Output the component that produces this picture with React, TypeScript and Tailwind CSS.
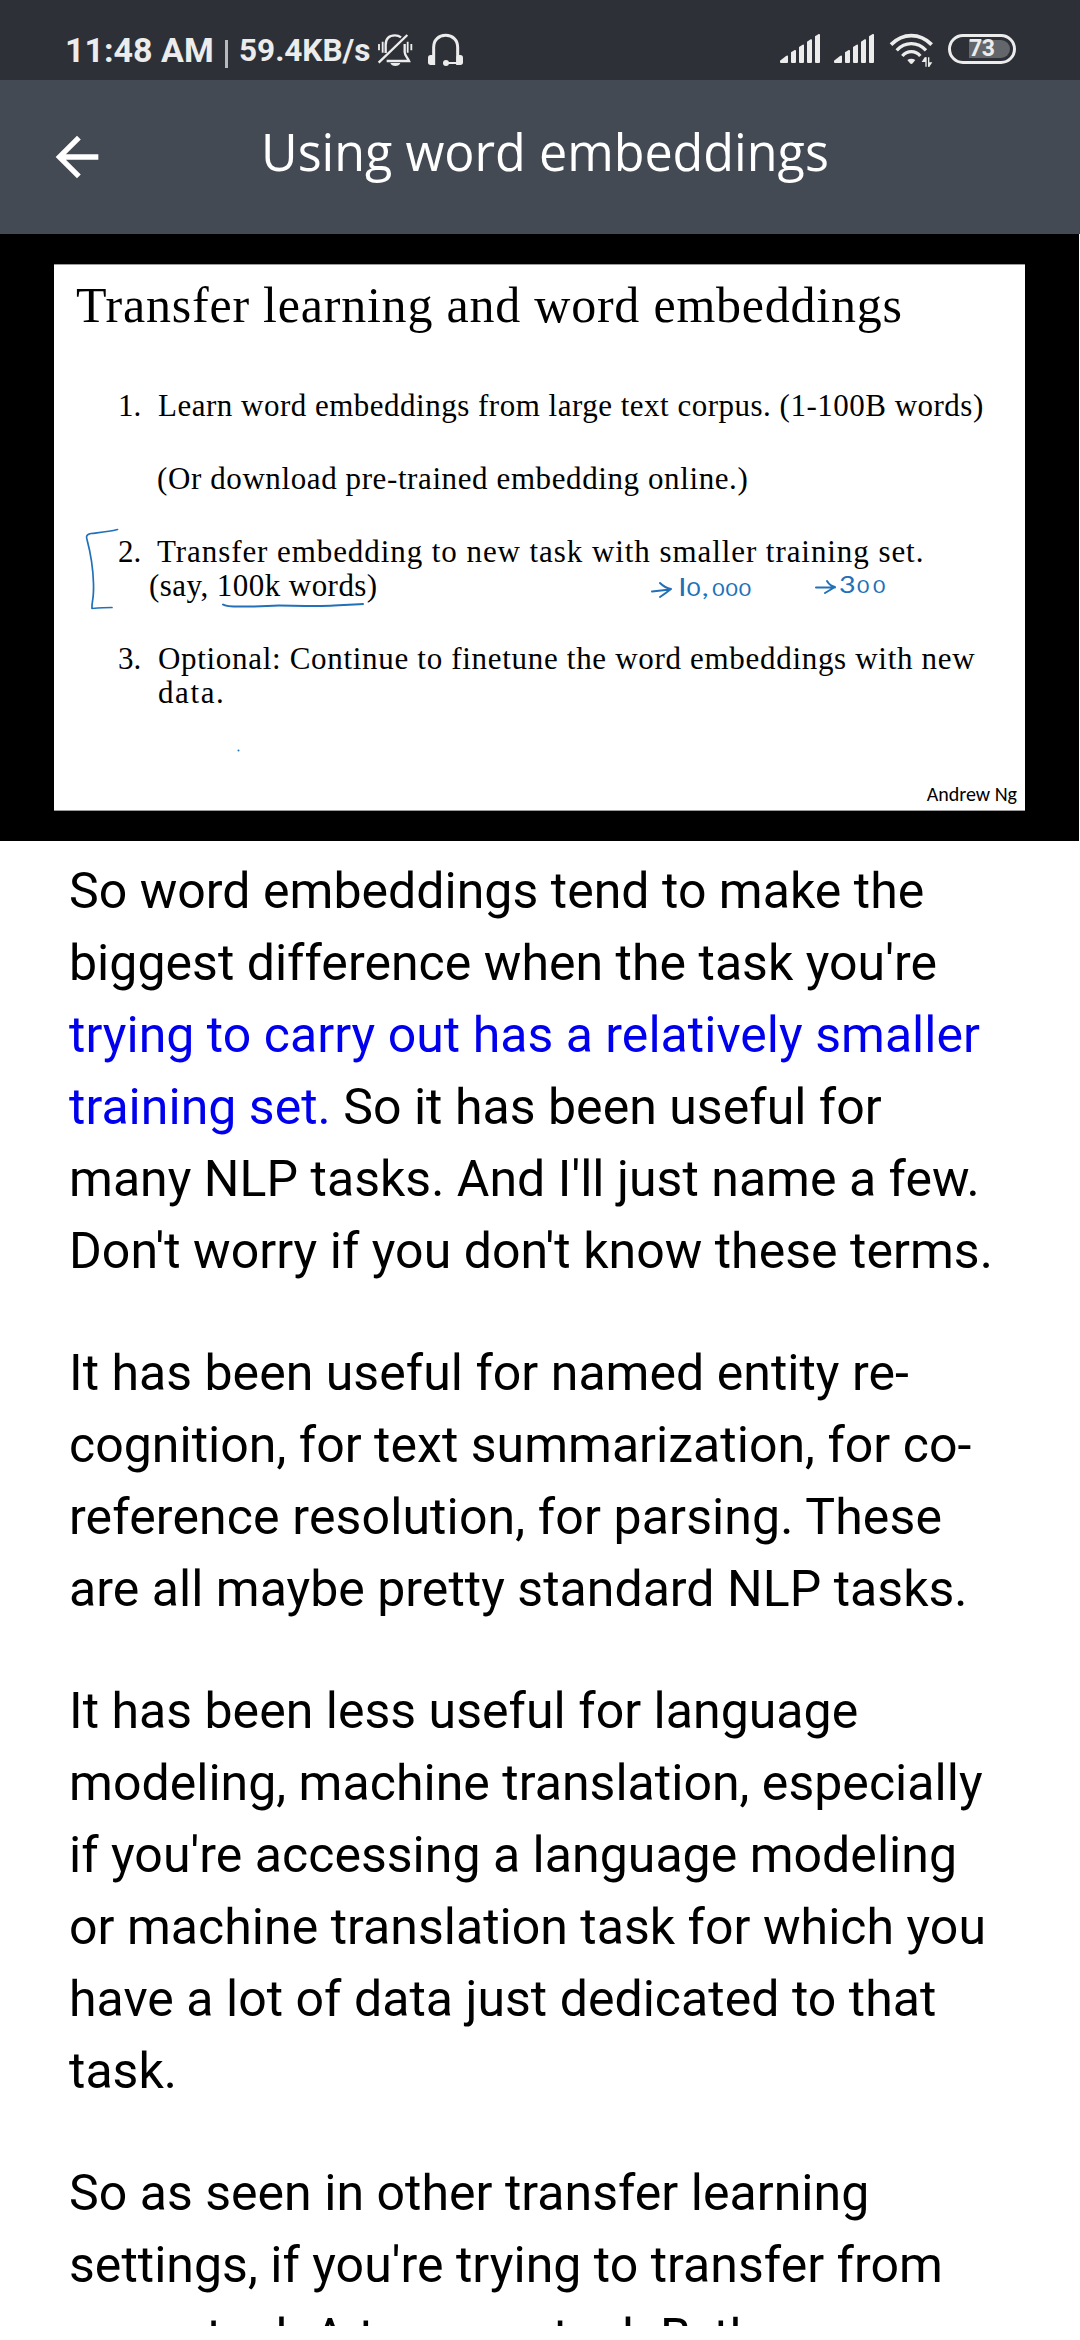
import type { ReactNode } from "react";

function MutedBellIcon() {
  return (
    <svg className="h-9 w-9" viewBox="21 21 108 108" fill="none" stroke="#ececec" strokeWidth="7">
      <path d="M27 57v19M38 50v33M113 50v33M124 57v19" strokeWidth="5.500" />
      <path d="M47 84V60C47 40 58 31 75 31c8 0 13 2 18 6" />
      <path d="M104 57v24c0 10 8 16 13 27H50" />
      <path d="M26 113 112 30" />
      <path d="M61 114h30c-3 12-27 12-30 0z" fill="#ececec" stroke="none" />
    </svg>
  );
}

function HeadsetIcon() {
  return (
    <svg className="h-9 w-[37px]" viewBox="171 21 111 108" fill="none" stroke="#ececec">
      <path d="M191 120V67c0-22 15-36 36-36s36 14 36 36v53" strokeWidth="9" />
      <rect x="174" y="90" width="20" height="30" rx="8" fill="#ececec" stroke="none" />
      <rect x="259" y="90" width="20" height="30" rx="8" fill="#ececec" stroke="none" />
      <circle cx="228" cy="114" r="9" fill="#ececec" stroke="none" />
      <path d="M228 114h35" strokeWidth="6" />
    </svg>
  );
}

function SignalIcon() {
  return (
    <svg className="mt-px h-[31px] w-[42px]" viewBox="27 24 126 93" fill="#ececec">
      <path d="M30 107l18-14q6-3 6 1v17q0 3-3 3H33q-3 0-3-3z" />
      <path d="M63 82l11-7q4-1 4 2v34q0 3-3 3h-9q-3 0-3-3z" />
      <path d="M87 66l11-7q4-1 4 2v50q0 3-3 3h-9q-3 0-3-3z" />
      <path d="M111 50l11-7q4-1 4 2v66q0 3-3 3h-9q-3 0-3-3z" />
      <path d="M135 34l11-7q4-1 4 2v82q0 3-3 3h-9q-3 0-3-3z" />
    </svg>
  );
}

function WifiIcon() {
  return (
    <svg className="h-9 w-[45px]" viewBox="357 21 135 108" fill="none" stroke="#ececec">
      <path d="M363 59Q390 32 424 32t61 27" strokeWidth="11" />
      <path d="M380 76q19-20 44-20t44 20" strokeWidth="10" />
      <path d="M397 93q11-13 27-13t27 13" strokeWidth="10" />
      <path d="M412 105q12-8 24 0l-8 10q-4 4-8 0z" fill="#ececec" stroke="none" />
      <path d="M468 125V97h-4l-9 14h13zM475 97v28h3l9-13h-12" fill="#ececec" stroke="none" />
      <path d="M468 97v28M476 97v28" strokeWidth="4" />
    </svg>
  );
}

function Battery() {
  return (
    <div className="mt-[2px] flex h-[30px] w-[68px] items-center rounded-full border-[3px] border-[#ececec]">
      <div className="ml-[18px] flex h-[18px] w-[41px] items-center rounded-r-full bg-[#63666b]">
        <span className="font-[Roboto] text-[23px] leading-[18px] font-bold tracking-[-0.5px] text-[#ececec]">73</span>
      </div>
    </div>
  );
}

function StatusBar() {
  return (
    <div className="flex h-20 items-start bg-[#2d3037] pt-8 pr-[64px] pl-[65px] font-[Roboto,sans-serif] font-bold whitespace-nowrap text-[#ececec]">
      <span className="w-[160px] text-[34px] leading-9">11:48 AM</span>
      <span className="mt-2 h-7 w-[3px] bg-[#b9babc]" />
      <span className="mt-px ml-[11px] w-[138px] text-[31.500px] leading-9">59.4KB/s</span>
      <MutedBellIcon />
      <div className="ml-[14px]">
        <HeadsetIcon />
      </div>
      <div className="ml-auto flex items-start">
        <SignalIcon />
        <div className="ml-3">
          <SignalIcon />
        </div>
        <div className="ml-[14px]">
          <WifiIcon />
        </div>
        <div className="ml-[14px]">
          <Battery />
        </div>
      </div>
    </div>
  );
}

function Header() {
  return (
    <header className="flex h-[154px] items-start bg-[#444a54] pl-[45px] text-white">
      <svg className="mt-[45px] h-16 w-16" viewBox="0 0 24 24" fill="currentColor">
        <path d="M20 11H7.83l5.59-5.59L12 4l-8 8 8 8 1.41-1.41L7.83 13H20z" />
      </svg>
      <h1 className="mt-[38px] ml-[152px] font-['Open_Sans',sans-serif] text-[50.250px] leading-[68px] whitespace-nowrap">
        Using word embeddings
      </h1>
    </header>
  );
}

function Annotations() {
  return (
    <div className="absolute inset-0 text-[#2170b8]">
      <svg className="h-full w-full" viewBox="54 265 971 545" fill="none" stroke="currentColor" strokeLinecap="round" strokeLinejoin="round">
        <path d="M117.500 529.500C108 532 99 532.500 91 533.500q-6 1-4 6c4 15 6 26 6.500 44s-2 17-1.500 25q12-1 20-1" strokeWidth="1.700" />
        <path d="M223 604.500c4 3 14 2 29 2s15-1 27-1 40 1 55 0 20-1 29-1.500" strokeWidth="2" />
        <circle cx="238.500" cy="750.500" r="1" fill="currentColor" stroke="none" />
        <path d="M652 591.500q9-1 18-2M660 583q5 5 11 6-5 4-11 8" strokeWidth="2" />
        <path d="M816 587.500h19M827 581q3 5 8 6-5 3-10 6" strokeWidth="2" />
      </svg>
      <div className="absolute top-[309px] left-[624px] flex h-6 items-end font-[Lato,sans-serif] leading-4 whitespace-nowrap">
        <span className="flex origin-bottom-left scale-x-125 items-baseline">
          <span className="font-['Liberation_Sans'] text-[25px] leading-4">I</span>
          <span className="text-[19px] leading-4">0</span>
          <span className="ml-px text-[24px] leading-4">,</span>
          <span className="ml-[3px] text-[17px] leading-4 tracking-[0.700px]">000</span>
        </span>
      </div>
      <div className="absolute top-[306px] left-[785px] flex h-6 items-end font-[Lato,sans-serif] leading-4 whitespace-nowrap">
        <span className="flex origin-bottom-left scale-x-125 items-baseline">
          <span className="text-[23px] leading-4">3</span>
          <span className="ml-px text-[17px] leading-4 tracking-[3px]">00</span>
        </span>
      </div>
    </div>
  );
}

function SlideItem({ marker, children }: { marker?: string; children: ReactNode }) {
  return (
    <li className="flex">
      <span className="w-10">{marker}</span>
      <div>{children}</div>
    </li>
  );
}

function Slide() {
  return (
    <section className="mr-px flex h-[607px] bg-black pt-[30px] pl-[54px]">
      <div className="relative h-[547px] w-[971px] border-y border-[#9c9c9c] bg-white font-['Liberation_Serif',serif] whitespace-nowrap text-black">
        <h2 className="mt-[10px] ml-[22px] text-[50px] leading-[60px] tracking-[0.780px]">
          Transfer learning and word embeddings
        </h2>
        <ol className="mt-[54px] ml-[64px] flex flex-col gap-[39px] text-[31px] leading-[34px]">
          <SlideItem marker="1.">
            <p className="tracking-[0.500px]">Learn word embeddings from large text corpus. (1-100B words)</p>
          </SlideItem>
          <SlideItem>
            <p className="-ml-px tracking-[0.600px]">(Or download pre-trained embedding online.)</p>
          </SlideItem>
          <SlideItem marker="2.">
            <p className="-ml-px tracking-[0.930px]">Transfer embedding to new task with smaller training set.</p>
            <p className="-ml-[9px] tracking-[0.450px]">(say, 100k words)</p>
          </SlideItem>
          <SlideItem marker="3.">
            <p className="tracking-[0.690px]">Optional: Continue to finetune the word embeddings with new</p>
            <p className="tracking-[1.600px]">data.</p>
          </SlideItem>
        </ol>
        <Annotations />
        <span className="absolute right-[8px] bottom-[2px] font-[Carlito,sans-serif] text-[20px] leading-7">Andrew Ng</span>
      </div>
    </section>
  );
}

const paragraphs: string[][] = [
  ["It has been useful for named entity re-", "cognition, for text summarization, for co-", "reference resolution, for parsing. These", "are all maybe pretty standard NLP tasks."],
  ["It has been less useful for language", "modeling, machine translation, especially", "if you're accessing a language modeling", "or machine translation task for which you", "have a lot of data just dedicated to that", "task."],
  ["So as seen in other transfer learning", "settings, if you're trying to transfer from", "some task A to some task B, the"],
];

function Transcript() {
  return (
    <main className="flex h-[1485px] flex-col gap-[50px] overflow-hidden pt-[14px] pl-[69px] font-[Roboto,sans-serif] text-[50px] leading-[72px] tracking-[0.030px] whitespace-nowrap text-black">
      <p>
        So word embeddings tend to make the
        <br />
        biggest difference when the task you're
        <br />
        <span className="text-[#0000ee]">
          trying to carry out has a relatively smaller
          <br />
          training set.
        </span>{" "}
        So it has been useful for
        <br />
        many NLP tasks. And I'll just name a few.
        <br />
        Don't worry if you don't know these terms.
      </p>
      {paragraphs.map((lines) => (
        <p key={lines[0]}>
          {lines.map((line) => (
            <span key={line} className={line.startsWith("reference") ? "block tracking-[0.130px]" : "block"}>
              {line}
            </span>
          ))}
        </p>
      ))}
    </main>
  );
}

export default function App() {
  return (
    <div className="h-[2340px] w-[1080px] overflow-hidden bg-white">
      <StatusBar />
      <Header />
      <Slide />
      <Transcript />
    </div>
  );
}
